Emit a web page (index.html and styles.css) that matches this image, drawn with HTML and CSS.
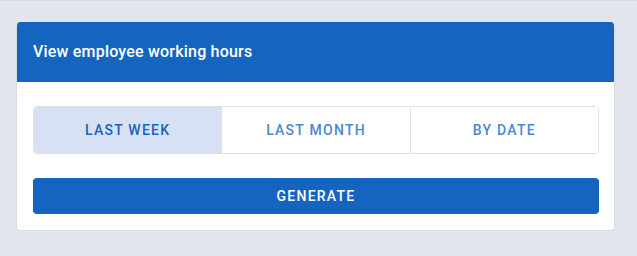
FILE: index.html
```html
<!DOCTYPE html>
<html lang="en">
<head>
    <meta charset="UTF-8">
    <meta name="viewport" content="width=device-width, initial-scale=1.0">
    <title>Working hours</title>
    <link rel="stylesheet" href="styles.css">
</head>
<body>
    <div class="card">
        <div class="card-header">View employee working hours</div>
        <div class="card-body">
            <div class="toggle-group">
                <button class="toggle active">Last week</button>
                <button class="toggle">Last month</button>
                <button class="toggle">By date</button>
            </div>
            <button class="btn-generate">Generate</button>
        </div>
    </div>
</body>
</html>
```

FILE: styles.css
```css
* {
    margin: 0;
    padding: 0;
    box-sizing: border-box;
    font-family: 'Roboto', sans-serif;
}

body {
    background: #e3e6ef;
    border-top: 1px solid #d6d9e3;
    padding: 21px 22px 0 16px;
}

.card {
    background: white;
    border-radius: 4px;
    border: 1px solid #d8dbe4;
    border-top: none;
    overflow: hidden;
    width: 599px;
}

.card-header {
    background: #1565c0;
    color: white;
    font-size: 16px;
    font-weight: 500;
    letter-spacing: 0.2px;
    height: 60px;
    line-height: 59px;
    padding: 0 16px;
}

.card-body {
    padding: 24px 15px 16px 16px;
}

.toggle-group {
    display: flex;
    border: 1px solid #e0e0e0;
    border-radius: 4px;
    overflow: hidden;
}

.toggle {
    flex: 1;
    height: 46px;
    background: white;
    border: none;
    border-left: 1px solid #e0e0e0;
    color: #4a87d2;
    font-size: 14px;
    font-weight: 500;
    letter-spacing: 1.25px;
    text-transform: uppercase;
    cursor: pointer;
}

.toggle:first-child {
    border-left: none;
}

.toggle.active {
    background: #d6e2f3;
    color: #1a62c0;
}

.btn-generate {
    display: block;
    width: 100%;
    height: 36px;
    margin-top: 24px;
    background: #1565c0;
    color: white;
    border: none;
    border-radius: 4px;
    font-size: 14px;
    font-weight: 500;
    letter-spacing: 1.25px;
    text-transform: uppercase;
    cursor: pointer;
}
```
